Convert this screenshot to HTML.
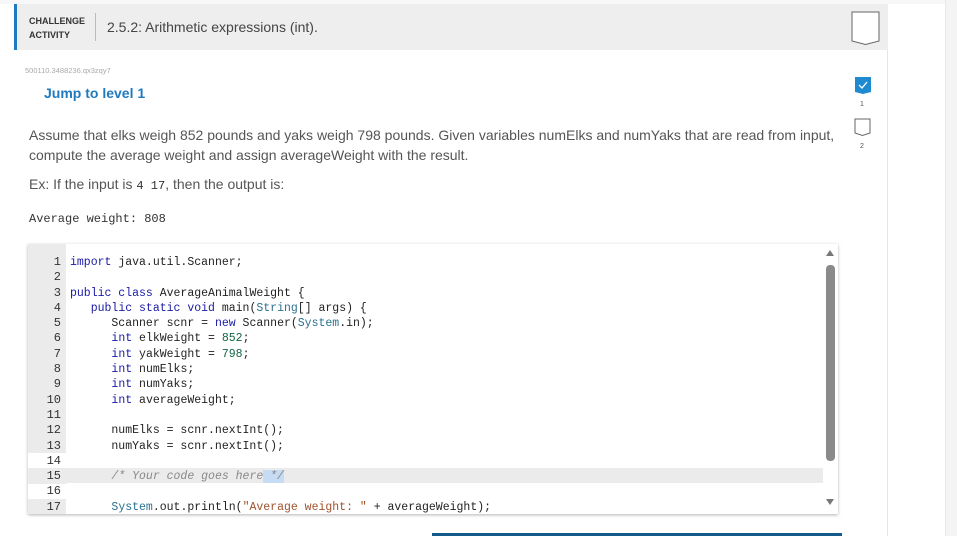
<!DOCTYPE html>
<html><head><style>
body{margin:0;width:957px;height:536px;overflow:hidden;background:#fff;font-family:"Liberation Sans",sans-serif;position:relative}
.a{position:absolute}
.mono{font-family:"Liberation Mono",monospace}
.code div{height:15.3px;line-height:15.3px;white-space:pre}
.k{color:#1a1aa6}.n{color:#116644}.s{color:#a0522d}.c{color:#888;font-style:italic}.t{color:#2a7090}
</style></head><body>
<div class="a" style="left:0;top:0;width:957px;height:4px;background:#f7f7f7"></div>
<div class="a" style="left:945px;top:0;width:12px;height:536px;background:#f4f4f4;border-left:1px solid #e8e8e8"></div>
<div class="a" style="left:887px;top:4px;width:1px;height:532px;background:#e6e6e6"></div>
<div class="a" style="left:14px;top:4px;width:874px;height:46px;background:#eeeeee"></div>
<div class="a" style="left:14px;top:4px;width:3px;height:46px;background:#1f7bbf"></div>
<div class="a" style="left:29px;top:14px;font-size:9px;font-weight:bold;color:#333;line-height:14px">CHALLENGE<br>ACTIVITY</div>
<div class="a" style="left:95px;top:13px;width:1px;height:28px;background:#bbb"></div>
<div class="a" style="left:107px;top:19px;font-size:14px;color:#444">2.5.2: Arithmetic expressions (int).</div>
<svg class="a" style="left:850px;top:10px" width="32" height="36"><path d="M2 2H29V31L15.5 34.5L2 31Z" fill="#fff" stroke="#666" stroke-width="1"/></svg>
<div class="a" style="left:25px;top:66px;font-size:7.5px;color:#aaa">500110.3488236.qx3zqy7</div>
<div class="a" style="left:44px;top:85px;font-size:14px;font-weight:bold;color:#1f7bbf">Jump to level 1</div>
<svg class="a" style="left:854px;top:76px" width="18" height="20"><path d="M1 1H17V16L9 18L1 16Z" fill="#1f8ad0"/><path d="M5 9L8 12L13 6" stroke="#fff" stroke-width="1.3" fill="none"/></svg>
<div class="a" style="left:860px;top:101px;font-size:7px;color:#555">1</div>
<svg class="a" style="left:854px;top:118px" width="18" height="20"><path d="M1 1H16V15L8.5 17.5L1 15Z" fill="#fff" stroke="#666"/></svg>
<div class="a" style="left:860px;top:143px;font-size:7px;color:#555">2</div>
<div class="a" style="left:29px;top:125px;width:820px;font-size:14px;color:#555;line-height:20px">Assume that elks weigh 852 pounds and yaks weigh 798 pounds. Given variables numElks and numYaks that are read from input, compute the average weight and assign averageWeight with the result.</div>
<div class="a" style="left:29px;top:176px;font-size:14px;color:#555">Ex: If the input is <span class="mono" style="font-size:12px;color:#333">4 17</span>, then the output is:</div>
<div class="a mono" style="left:29px;top:212px;font-size:12px;color:#333">Average weight: 808</div>
<div class="a" style="left:28px;top:244px;width:810px;height:270px;background:#fff;box-shadow:0 1px 3px rgba(0,0,0,.3)"></div>
<div class="a" style="left:28px;top:244px;width:38px;height:270px;background:#ebebeb"></div>
<div class="a" style="left:66px;top:468px;width:757px;height:15px;background:#ebebeb"></div>
<div class="a" style="left:28px;top:453px;width:38px;height:15px;background:#fff"></div>
<div class="a" style="left:28px;top:484px;width:38px;height:15px;background:#fff"></div>
<div class="a" style="left:826px;top:265px;width:9px;height:196px;background:#8a8a8a;border-radius:4px"></div>
<div class="a" style="left:826px;top:250px;width:0;height:0;border:4px solid transparent;border-bottom:6px solid #777;border-top:0"></div>
<div class="a" style="left:826px;top:499px;width:0;height:0;border:4px solid transparent;border-top:6px solid #777;border-bottom:0"></div>
<div class="a mono code" style="left:34px;top:255px;font-size:12px;color:#333;width:27px;text-align:right"><div>1</div><div>2</div><div>3</div><div>4</div><div>5</div><div>6</div><div>7</div><div>8</div><div>9</div><div>10</div><div>11</div><div>12</div><div>13</div><div>14</div><div>15</div><div>16</div><div>17</div></div>
<div class="a mono code" style="left:70px;top:255px;font-size:11.5px;color:#222"><div><span class="k">import</span> java.util.Scanner;</div><div> </div><div><span class="k">public class</span> AverageAnimalWeight {</div><div>   <span class="k">public static void</span> main(<span class="t">String</span>[] args) {</div><div>      Scanner scnr = <span class="k">new</span> Scanner(<span class="t">System</span>.in);</div><div>      <span class="k">int</span> elkWeight = <span class="n">852</span>;</div><div>      <span class="k">int</span> yakWeight = <span class="n">798</span>;</div><div>      <span class="k">int</span> numElks;</div><div>      <span class="k">int</span> numYaks;</div><div>      <span class="k">int</span> averageWeight;</div><div> </div><div>      numElks = scnr.nextInt();</div><div>      numYaks = scnr.nextInt();</div><div> </div><div>      <span class="c">/* Your code goes here<span style="background:#c6dcf5"> */</span></span></div><div> </div><div>      <span class="t">System</span>.out.println(<span class="s">"Average weight: "</span> + averageWeight);</div></div>
<div class="a" style="left:432px;top:533px;width:410px;height:3px;background:#145a8a"></div>
</body></html>
